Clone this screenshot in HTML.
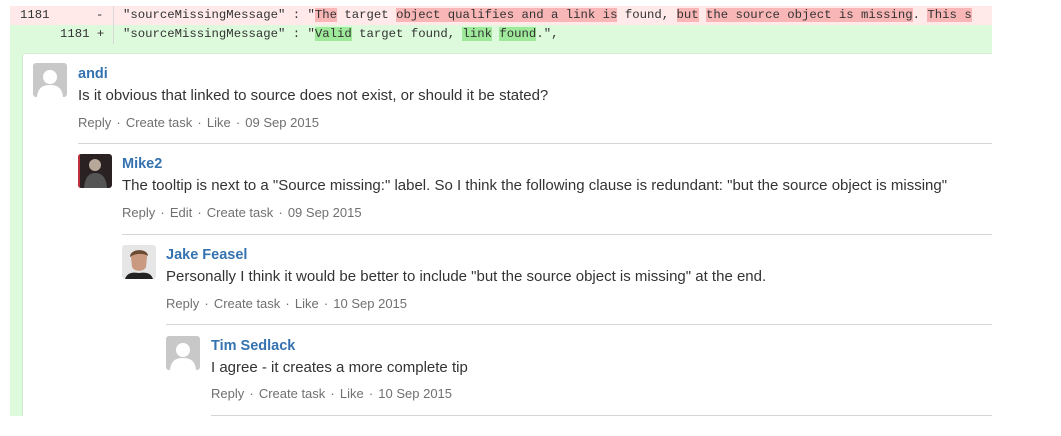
<!DOCTYPE html>
<html><head><meta charset="utf-8"><style>
*{margin:0;padding:0;box-sizing:border-box}
body{width:1061px;height:436px;background:#fff;position:relative;overflow:hidden;font-family:"Liberation Sans",Arial,sans-serif}
.row{position:absolute;left:10px;width:982px;height:19px;font-family:"Liberation Mono",monospace;font-size:12.3px;line-height:19px;white-space:pre;overflow:hidden;color:#333}
.r{background:#ffe9e9;top:6px}
.g{background:#ddfbdc;top:25px}
.ln{position:absolute;top:0}
.code{position:absolute;left:103px;top:0;padding-left:9px;border-left:1px solid #d8d8d8;height:19px}
.dr{background:#f9b6b6}.dg{background:#9eea9a}
.greenbg{position:absolute;left:10px;top:44px;width:982px;height:372px;background:#ddfbdc}
.card{position:absolute;left:22px;top:53px;width:970px;height:363px;background:#fff;border-left:1px solid #cfe8cf;border-top:1px solid #d4ecd4;border-top-left-radius:3px}
.av{position:absolute;width:34px;height:34px;border-radius:3px;background:#c8c8c8;overflow:hidden}
.av svg{display:block}
.name{position:absolute;font-size:14.5px;font-weight:bold;color:#3572b0}
.body{position:absolute;font-size:15px;color:#333;white-space:nowrap}
.act{position:absolute;font-size:13px;color:#707070;white-space:pre}
.act i{font-style:normal;margin:0 1.5px}
.hr{position:absolute;height:1px;background:#d5d5d5;right:69px}
</style></head><body>
<div class="row r"><span class="ln" style="left:10px">1181</span><span class="ln" style="left:86px">-</span><div class="code">"sourceMissingMessage" : "<span class="dr">The</span> target <span class="dr">object qualifies and a link is</span> found, <span class="dr">but</span> <span class="dr">the source object is missing</span>. <span class="dr">This s</span></div></div>
<div class="row g"><span class="ln" style="left:50px">1181 +</span><div class="code">"sourceMissingMessage" : "<span class="dg">Valid</span> target found, <span class="dg">link</span> <span class="dg">found</span>.",</div></div>
<div class="greenbg"></div>
<div class="card"></div>

<div class="av" style="left:33px;top:63px"><svg width="34" height="34"><circle cx="17" cy="14" r="7" fill="#fff"/><path d="M4 34 C5 23 12 22 17 22 C22 22 29 23 30 34Z" fill="#fff"/></svg></div>
<div class="name" style="left:78px;top:66px">andi</div>
<div class="body" style="left:78px;top:87px">Is it obvious that linked to source does not exist, or should it be stated?</div>
<div class="act" style="left:78px;top:115px">Reply <i>·</i> Create task <i>·</i> Like <i>·</i> 09 Sep 2015</div>
<div class="hr" style="left:78px;top:143px"></div>

<div class="av" style="left:78px;top:154px;background:#2a2222"><svg width="34" height="34"><rect x="0" y="0" width="2" height="34" fill="#c0303a"/><circle cx="17" cy="11" r="6" fill="#b8a89a"/><path d="M6 34 C7 22 12 19 17 19 C23 19 28 22 29 34Z" fill="#555"/></svg></div>
<div class="name" style="left:122px;top:156px">Mike2</div>
<div class="body" style="left:122px;top:177px">The tooltip is next to a "Source missing:" label. So I think the following clause is redundant: "but the source object is missing"</div>
<div class="act" style="left:122px;top:205px">Reply <i>·</i> Edit <i>·</i> Create task <i>·</i> 09 Sep 2015</div>
<div class="hr" style="left:122px;top:234px"></div>

<div class="av" style="left:122px;top:245px;background:#e6e6e6"><svg width="34" height="34"><path d="M9 12 C9 4 25 4 25 12 L24 22 C22 27 12 27 10 22Z" fill="#c99a80"/><path d="M8 12 C8 3 26 3 26 11 C22 8 13 8 8 12Z" fill="#6a4a30"/><path d="M3 34 C5 28 10 27 17 28 C24 27 29 28 31 34Z" fill="#222"/></svg></div>
<div class="name" style="left:166px;top:247px">Jake Feasel</div>
<div class="body" style="left:166px;top:268px">Personally I think it would be better to include "but the source object is missing" at the end.</div>
<div class="act" style="left:166px;top:296px">Reply <i>·</i> Create task <i>·</i> Like <i>·</i> 10 Sep 2015</div>
<div class="hr" style="left:166px;top:324px"></div>

<div class="av" style="left:166px;top:336px"><svg width="34" height="34"><circle cx="17" cy="14" r="7" fill="#fff"/><path d="M4 34 C5 23 12 22 17 22 C22 22 29 23 30 34Z" fill="#fff"/></svg></div>
<div class="name" style="left:211px;top:338px">Tim Sedlack</div>
<div class="body" style="left:211px;top:359px">I agree - it creates a more complete tip</div>
<div class="act" style="left:211px;top:386px">Reply <i>·</i> Create task <i>·</i> Like <i>·</i> 10 Sep 2015</div>
<div class="hr" style="left:211px;top:415px"></div>
</body></html>
